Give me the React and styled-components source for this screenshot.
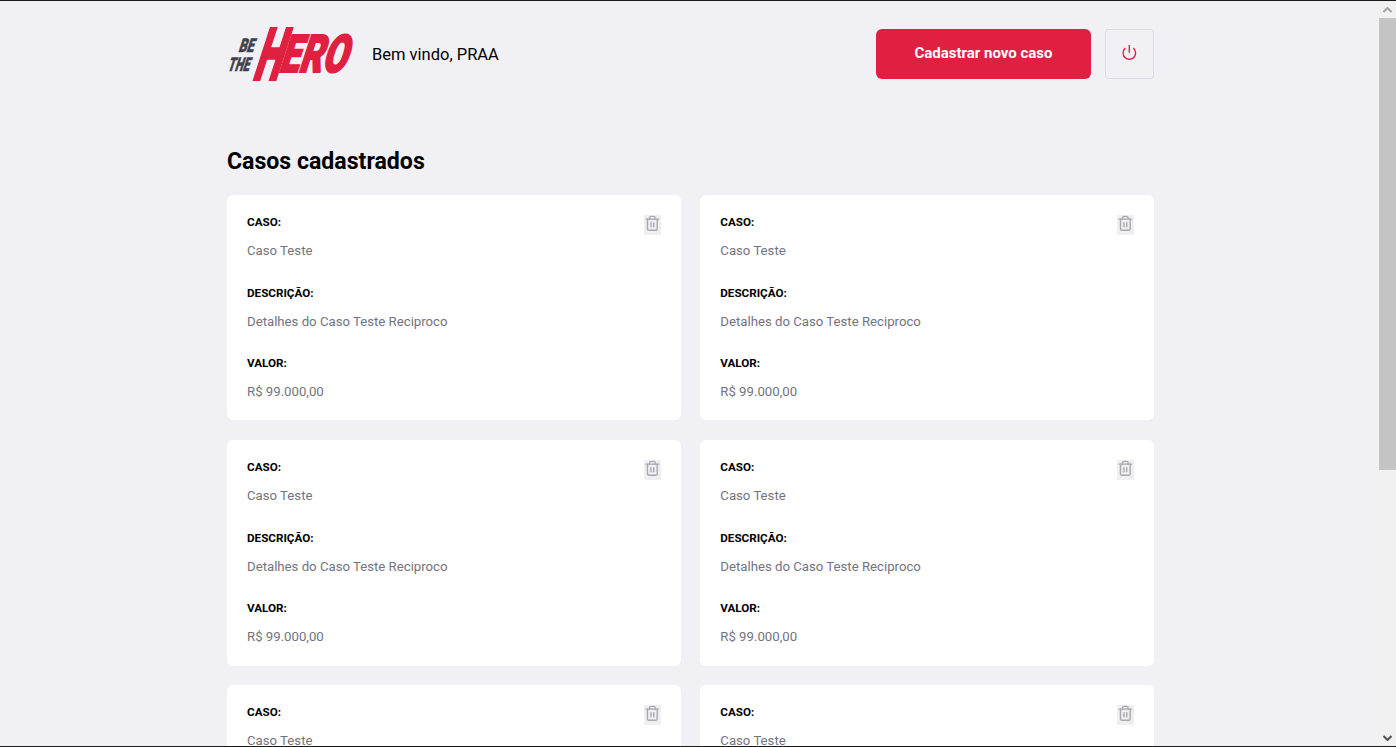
import React from "react";
import styled, { createGlobalStyle } from "styled-components";
import { FiPower, FiTrash2 } from "react-icons/fi";

const GlobalStyle = createGlobalStyle`
  * {
    margin: 0;
    padding: 0;
    box-sizing: border-box;
  }
  html, body {
    height: 100%;
    overflow: hidden;
  }
  body {
    background: #f0f0f5;
    font-family: Roboto, "Liberation Sans", sans-serif;
    -webkit-font-smoothing: antialiased;
  }
`;

const Window = styled.div`
  height: 747px;
  display: flex;
  flex-direction: column;
  border-top: 1px solid #1a1a1a;
  border-bottom: 1px solid #1a1a1a;
`;

const Viewport = styled.div`
  flex: 1;
  min-height: 0;
  display: flex;
`;

const Page = styled.div`
  flex: 1;
  min-width: 0;
  overflow: hidden;
`;

const Container = styled.div`
  width: 927px;
  margin-left: 227px;
  padding-top: 26px;
`;

const Header = styled.header`
  display: flex;
  align-items: center;
  height: 54px;
`;

const Logo = styled.svg`
  width: 126px;
  height: 54px;
  flex-shrink: 0;
`;

const Welcome = styled.span`
  font-size: 16.5px;
  margin-left: 19px;
  color: #000;
`;

const NewCase = styled.a`
  margin-left: auto;
  width: 215px;
  height: 50px;
  padding-bottom: 2px;
  border-radius: 6px;
  background: #e02041;
  color: #fff;
  font-size: 15px;
  font-weight: 700;
  display: flex;
  align-items: center;
  justify-content: center;
`;

const PowerButton = styled.button`
  width: 49px;
  height: 50px;
  margin-left: 14px;
  padding-bottom: 4px;
  border: 1px solid #dcdce6;
  border-radius: 3px;
  background: transparent;
  color: #e02041;
  display: flex;
  align-items: center;
  justify-content: center;
`;

const Title = styled.h1`
  font-size: 23.1px;
  line-height: 26px;
  font-weight: 700;
  color: #000;
  margin-top: 68px;
  margin-bottom: 20px;
`;

const CaseList = styled.ul`
  list-style: none;
  display: grid;
  grid-template-columns: 454px 454px;
  column-gap: 19.3px;
  row-gap: 19.8px;
`;

const Card = styled.li`
  position: relative;
  height: 225.4px;
  padding: 20px 20px 0;
  background: #fff;
  border-radius: 6px;
`;

const Label = styled.strong`
  display: block;
  height: 16px;
  font-size: 11.67px;
  line-height: 14.5px;
  font-weight: 700;
  color: #000;
  margin-bottom: 12px;
`;

const Value = styled.p`
  height: 16px;
  font-size: 13.2px;
  line-height: 16px;
  color: #737380;
  margin-bottom: 26.5px;
`;

const TrashButton = styled.button`
  position: absolute;
  top: 20px;
  right: 20px;
  width: 17px;
  height: 20px;
  border: 0;
  background: #efeff0;
  color: #a8a8b3;
  display: flex;
  align-items: flex-start;
  justify-content: center;
`;

const Scrollbar = styled.div`
  width: 17px;
  flex-shrink: 0;
  background: #f1f1f1;
  display: flex;
  flex-direction: column;
`;

const ScrollArrow = styled.div`
  height: 17px;
  display: flex;
  align-items: center;
  justify-content: center;
`;

const ScrollTrack = styled.div`
  flex: 1;
`;

const ScrollThumb = styled.div`
  height: 452px;
  background: #c4c4c4;
`;

const cases = Array.from({ length: 6 }, (_, id) => ({
  id,
  title: "Caso Teste",
  description: "Detalhes do Caso Teste Reciproco",
  value: "R$ 99.000,00",
}));

function HeroLogo() {
  return (
    <Logo viewBox="0 0 126 54" aria-label="Be The Hero">
      <g fontFamily="Roboto, sans-serif" fontWeight="900">
        <g fill="#41414d" stroke="#41414d" strokeWidth=".6" fontSize="19">
          <text transform="translate(11 25) skewX(-18) scale(.66 1)">BE</text>
          <text transform="translate(0 44) skewX(-18) scale(.6 1)">THE</text>
        </g>
        <g fill="#e02041" stroke="#e02041">
          <text fontSize="76" strokeWidth="2.4" transform="translate(24 54) skewX(-18) scale(.5 1)">H</text>
          <text fontSize="52" strokeWidth="2" transform="translate(51 45) skewX(-18) scale(.68 1)">ERO</text>
        </g>
      </g>
    </Logo>
  );
}

export default function App() {
  return (
    <>
      <GlobalStyle />
      <Window>
        <Viewport>
          <Page>
            <Container>
              <Header>
                <HeroLogo />
                <Welcome>Bem vindo, PRAA</Welcome>
                <NewCase>Cadastrar novo caso</NewCase>
                <PowerButton>
                  <FiPower size={16.67} />
                </PowerButton>
              </Header>
              <Title>Casos cadastrados</Title>
              <CaseList>
                {cases.map((item) => (
                  <Card key={item.id}>
                    <Label>CASO:</Label>
                    <Value>{item.title}</Value>
                    <Label>DESCRIÇÃO:</Label>
                    <Value>{item.description}</Value>
                    <Label>VALOR:</Label>
                    <Value>{item.value}</Value>
                    <TrashButton>
                      <FiTrash2 size={16.67} />
                    </TrashButton>
                  </Card>
                ))}
              </CaseList>
            </Container>
          </Page>
          <Scrollbar>
            <ScrollArrow>
              <svg width="9" height="6" viewBox="0 0 9 6">
                <path d="M0.5 5 L4.5 1 L8.5 5" fill="none" stroke="#a3a3a3" strokeWidth="2" />
              </svg>
            </ScrollArrow>
            <ScrollThumb />
            <ScrollTrack />
            <ScrollArrow>
              <svg width="9" height="6" viewBox="0 0 9 6">
                <path d="M0.5 1 L4.5 5 L8.5 1" fill="none" stroke="#505050" strokeWidth="2" />
              </svg>
            </ScrollArrow>
          </Scrollbar>
        </Viewport>
      </Window>
    </>
  );
}
